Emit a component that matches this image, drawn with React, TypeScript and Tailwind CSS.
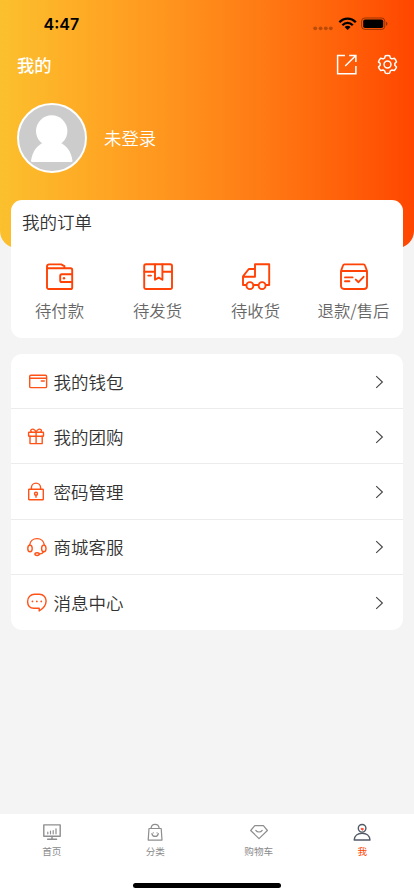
import type { ReactNode } from 'react';

type IconProps = { children: ReactNode; size: number; width?: number; className?: string };

function Icon({ children, size, width = 1.2, className }: IconProps) {
  return (
    <svg
      width={size}
      height={size}
      viewBox={`0 0 ${size} ${size}`}
      fill="none"
      stroke="currentColor"
      strokeWidth={width}
      strokeLinecap="round"
      strokeLinejoin="round"
      className={className}
    >
      {children}
    </svg>
  );
}

const orders = [
  {
    label: '待付款',
    icon: (
      <>
        <path d="M2 6.2V25.2a1.8 1.8 0 0 0 1.8 1.8H25.6a1.6 1.6 0 0 0 1.6-1.6V7.8A1.6 1.6 0 0 0 25.6 6.2H2V4.4A2 2 0 0 1 4 2.4H16.2L19.4 4.2V6" />
        <path d="M27 12.3H16.8a1.6 1.6 0 0 0-1.6 1.6V18.4a1.6 1.6 0 0 0 1.6 1.6H27" />
        <circle cx="19" cy="16.3" r="1.2" fill="currentColor" stroke="none" />
      </>
    ),
  },
  {
    label: '待发货',
    icon: (
      <>
        <rect x="1.2" y="2.2" width="27.8" height="24.8" rx="1.8" />
        <path d="M1.4 9.8H12M19.4 9.8H28.8M12 2.4V17.8L15.7 15.6L19.4 17.8V2.4M5.2 13.6H8" />
      </>
    ),
  },
  {
    label: '待收货',
    icon: (
      <>
        <path d="M5.4 23H2V14.4L7.8 7H14V2.3H28.2V23H24.8M12.4 23H17.2M2 14.7H14V7" />
        <circle cx="8.9" cy="23.6" r="3.5" />
        <circle cx="21.1" cy="23.6" r="3.5" />
      </>
    ),
  },
  {
    label: '退款/售后',
    icon: (
      <>
        <path d="M2 9L4 3.5A1.6 1.6 0 0 1 5.5 2.4H24.5A1.6 1.6 0 0 1 26 3.5L28 9V24a3 3 0 0 1-3 3H5a3 3 0 0 1-3-3ZM2 9H28" />
        <path d="M6 15.4H13.6M6 19.2H10.4M16.8 17.6L19.5 20.2L24.6 14.8" />
      </>
    ),
  },
];

const menu = [
  {
    label: '我的钱包',
    icon: (
      <>
        <rect x="3.7" y="4.3" width="16.9" height="12.3" rx="1.2" />
        <path d="M4 7.3H20.5M15.3 10H18.3" />
      </>
    ),
  },
  {
    label: '我的团购',
    icon: (
      <>
        <rect x="2.6" y="6.3" width="14.9" height="4" rx="0.5" />
        <path d="M4 10.3V17.6H16.2V10.3M10.1 6.3V17.6M10.1 6.1C8.8 3.2 6.5 2.7 5.4 3.5C4.3 4.4 4.7 5.7 5.7 6.1M10.1 6.1C11.4 3.2 13.7 2.7 14.8 3.5C15.9 4.4 15.5 5.7 14.5 6.1" />
      </>
    ),
  },
  {
    label: '密码管理',
    icon: (
      <>
        <rect x="2.7" y="8.2" width="14.6" height="10.6" rx="0.6" />
        <path d="M5.4 8V6.7A4.5 4.5 0 0 1 14.6 6.7V8M10 14.4V16.2" />
        <circle cx="10" cy="12.7" r="1.5" />
      </>
    ),
  },
  {
    label: '商城客服',
    icon: (
      <>
        <path d="M3.7 9C4 5.3 7 2.6 11 2.6S18 5.3 18.3 9M17.9 15.5C17 17.2 15.2 17.9 13.4 18.1" />
        <ellipse cx="4" cy="12.4" rx="2.2" ry="3.3" />
        <ellipse cx="17.8" cy="12.4" rx="2.2" ry="3.3" />
        <ellipse cx="11.1" cy="18.1" rx="2.2" ry="1.4" />
      </>
    ),
  },
  {
    label: '消息中心',
    icon: (
      <>
        <path d="M13.2 19V16.3H8C4 16 1.6 13.2 1.6 9.4C1.6 5.2 4.8 2.3 8.5 2.3H13.4C17.4 2.3 20.1 5.3 20.1 9C20.1 13.1 16.8 16.8 13.2 19Z" />
        <path d="M6.4 9.4h.1M10.8 9.4h.1M15.2 9.4h.1" strokeWidth="1.7" />
      </>
    ),
  },
];

const tabs = [
  {
    label: '首页',
    icon: (
      <>
        <rect x="1.8" y="2.9" width="16.4" height="11.4" strokeWidth="1.4" />
        <path d="M10 14.5V17M5.6 17.3H14.6" strokeWidth="1.4" />
        <path d="M5.8 11.8V10.2M8.5 11.8V9.2M11.2 11.8V8.5M14 11.8V6.8" />
      </>
    ),
  },
  {
    label: '分类',
    icon: (
      <>
        <path d="M4 6.5H16.2L17 18.1H3.2ZM6 6.3C6.3 4 8 2.4 10.1 2.4S13.9 4 14.2 6.3" />
        <path d="M6.9 11.6C7.5 15.4 12.7 15.4 13.3 11.6M8.2 10.8h.1M12 10.8h.1" />
      </>
    ),
  },
  {
    label: '购物车',
    icon: (
      <>
        <path d="M5.8 3.6H14.4L18.4 8.5L10 16.6L1.7 8.5Z" />
        <path d="M6.8 8.4C8.2 10.5 11.8 10.5 13.2 8.4" />
      </>
    ),
  },
  {
    label: '我',
    active: true,
    icon: (
      <>
        <circle cx="10.1" cy="6.3" r="3.8" />
        <path d="M2.2 18C2.4 13.9 5.7 11.3 10.1 11.3S17.8 13.9 18 18Z" />
        <path d="M10.2 8.3L8.8 6.9Q9.1 5.8 10.2 6.4Q11.3 5.8 11.6 6.9Z" fill="#ff3b20" stroke="#ff3b20" strokeWidth="0.6" />
      </>
    ),
  },
];

function StatusBar() {
  return (
    <div className="flex h-[47px] items-center justify-between pl-[43.5px] pr-[26px] text-black">
      <span className="font-['Inter',sans-serif] text-[16px] font-semibold leading-none">4:47</span>
      <svg width="75" height="16" viewBox="0 0 75 16">
        <g fill="#000" opacity="0.27">
          <circle cx="2.2" cy="12.3" r="1.9" />
          <circle cx="7.6" cy="12.3" r="1.9" />
          <circle cx="12.8" cy="12.3" r="1.9" />
          <circle cx="17.8" cy="12.3" r="1.9" />
        </g>
        <g fill="none" stroke="#000" strokeWidth="2.3">
          <path d="M26.4 6.3C31 1.3 38.2 1.3 42.8 6.3" />
          <path d="M29.4 9.2C32.3 6.1 36.9 6.1 39.8 9.2" />
        </g>
        <path d="M31.6 10.9C33.2 9.4 36 9.4 37.6 10.9L34.6 13.9Z" />
        <rect x="48.6" y="2" width="23.2" height="11.4" rx="3.2" fill="none" stroke="#000" strokeOpacity="0.4" />
        <rect x="50.2" y="3.4" width="20" height="8.6" rx="1.8" />
        <path d="M73.2 5.7C74.8 6.4 74.8 9 73.2 9.7Z" opacity="0.5" />
      </svg>
    </div>
  );
}

export default function App() {
  return (
    <div className="flex h-[896px] w-[414px] flex-col overflow-hidden bg-[#f4f4f4] font-['Noto_Sans_CJK_SC',sans-serif]">
      <header className="h-[248px] shrink-0 rounded-b-[17px] bg-linear-to-r from-[#fbc02d] to-[#ff4500] text-white">
        <StatusBar />
        <div className="flex h-[35px] items-center justify-between pl-[17px] pr-[16px]">
          <h1 className="text-[17.3px] font-medium leading-none">我的</h1>
          <div className="flex items-center gap-[20px]">
            <Icon size={21} width={1.5}>
              <path d="M9 1.4H1.6V19.7H19.9V12M13.2 1.4H19.9V8M19.6 1.7L9.2 12" strokeLinecap="butt" strokeLinejoin="miter" />
            </Icon>
            <svg width="21" height="21" viewBox="-0.7 -0.6 22.4 22.4" fill="none" stroke="currentColor" strokeWidth="1.6" strokeLinejoin="round">
              <path d="M8.2 1.2Q10.5 .6 12.8 1.2L13.6 3.7L15.2 4.6L17.8 3.9Q19.4 5.6 20.1 7.8L18.3 9.6V11.4L20.1 13.2Q19.4 15.4 17.8 17.1L15.2 16.4L13.6 17.3L12.8 19.8Q10.5 20.4 8.2 19.8L7.4 17.3L5.8 16.4L3.2 17.1Q1.6 15.4 .9 13.2L2.7 11.4V9.6L.9 7.8Q1.6 5.6 3.2 3.9L5.8 4.6L7.4 3.7Z" />
              <circle cx="10.5" cy="10.5" r="3.7" />
            </svg>
          </div>
        </div>
        <div className="mt-[21px] flex items-center gap-[17px] pl-[17px]">
          <svg width="70" height="70" viewBox="0 0 70 70">
            <circle cx="35" cy="35" r="34" fill="#ccc" stroke="#fff" strokeWidth="2" />
            <circle cx="34.7" cy="28" r="15.7" fill="#fff" />
            <path d="M14 57.8C15.5 48 20.5 41.8 27 39.6H42.5C49 41.8 54 48 55.5 57.8Q55.5 59 54.3 59H15.2Q14 59 14 57.8Z" fill="#fff" />
          </svg>
          <span className="text-[17.4px] font-[350] leading-none">未登录</span>
        </div>
      </header>

      <section className="mx-[11px] -mt-[47.6px] h-[137.6px] shrink-0 rounded-[11px] bg-white">
        <h2 className="px-[11px] pt-[9px] text-[17.5px] font-[350] leading-[26px] text-[#333]">我的订单</h2>
        <div className="mt-[26.6px] grid grid-cols-4">
          {orders.map((item) => (
            <div key={item.label} className="flex flex-col items-center">
              <Icon size={30} width={1.9} className="text-[#ff4206]">
                {item.icon}
              </Icon>
              <span className="mt-[5.4px] -ml-px whitespace-nowrap text-[16.4px] font-[350] leading-[26px] text-[#666]">
                {item.label}
              </span>
            </div>
          ))}
        </div>
      </section>

      <section className="mx-[11px] mt-[16.2px] shrink-0 divide-y divide-[#ececec] rounded-[11px] bg-white">
        {menu.map((item) => (
          <div key={item.label} className="flex h-[55.15px] items-center pl-[15px] pr-[19px] pt-[1px]">
            <Icon size={22} width={1.4} className="text-[#ff5217]">
              {item.icon}
            </Icon>
            <span className="ml-[5.5px] flex-1 text-[17.5px] font-[350] leading-[26px] text-[#333]">{item.label}</span>
            <svg width="9" height="14" viewBox="0 0 9 14" fill="none" stroke="#444" strokeWidth="1.1">
              <path d="M1.2 1.2L7.4 7L1.2 12.8" />
            </svg>
          </div>
        ))}
      </section>

      <nav className="mt-auto flex h-[82px] shrink-0 flex-col items-center justify-between bg-white pb-[8px] pt-[8px]">
        <div className="grid w-full grid-cols-4">
          {tabs.map((tab) => (
            <div key={tab.label} className="flex flex-col items-center">
              <Icon size={20} width={tab.active ? 1.4 : 1.2} className={tab.active ? 'text-[#515a66]' : 'text-[#8e8e90]'}>
                {tab.icon}
              </Icon>
              <span className={`mt-[2px] text-[9.6px] leading-[14px] ${tab.active ? 'text-[#ff4500]' : 'text-[#8a8a8c]'}`}>
                {tab.label}
              </span>
            </div>
          ))}
        </div>
        <div className="h-[5px] w-[148px] rounded-full bg-black" />
      </nav>
    </div>
  );
}
